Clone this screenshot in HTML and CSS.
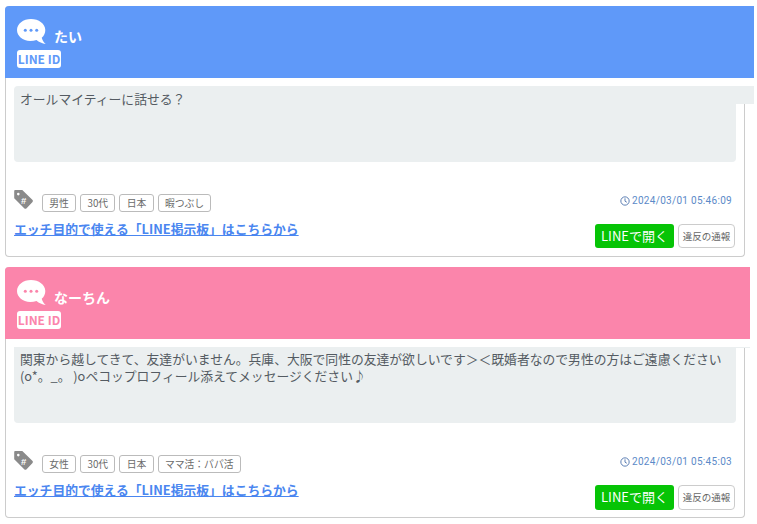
FILE: index.html
```html
<!DOCTYPE html>
<html lang="ja">
<head>
<meta charset="utf-8">
<title>LINE掲示板</title>
<link rel="stylesheet" href="styles.css">
</head>
<body>
<div class="card">
  <div class="head head-blue">
    <div class="title"><svg class="bubble" viewBox="0 0 29 25"><path fill="#fff" d="M14 0C6.300 0 0 4.900 0 11c0 6 5.800 10.800 13.200 11 2.300 0 4.400-.4 6.300-1.100 2.500 2.200 5.700 3.400 9.200 4.100-1.900-1.600-3.300-3.700-4-6.200C27.100 16.900 28.300 14.100 28.300 11 28.300 4.900 21.700 0 14 0z"/><circle class="dot" cx="8.300" cy="11.200" r="1.500"/><circle class="dot" cx="14" cy="11.200" r="1.500"/><circle class="dot" cx="19.700" cy="11.200" r="1.500"/></svg><span class="name">たい</span></div>
    <span class="lineid">LINE ID</span>
  </div>
  <div class="cover cover-blue"></div>
  <div class="msg-wrap">
    <pre class="msg msg-one">オールマイティーに話せる？</pre>
    <div class="msg-fill"></div>
  </div>
  <div class="meta">
    <div class="tags">
      <svg class="tagicon" viewBox="0 0 19 19"><path fill="#8a8a8a" d="M1.400 0h6.900l10 9.800c.8.800.8 1.600 0 2.400l-5.700 6c-.8.800-1.700.8-2.400 0L.2 8.200V1.400C.2.500.6 0 1.400 0z"/><circle cx="4.300" cy="4.100" r="1.300" fill="#fff"/><text x="7" y="14" class="hash">#</text></svg>
      <span class="tag">男性</span><span class="tag">30代</span><span class="tag">日本</span><span class="tag">暇つぶし</span>
    </div>
    <div class="time"><svg class="clock" viewBox="0 0 12 12"><circle cx="6" cy="6" r="5" fill="none" stroke="#4f74ad" stroke-width="1.100"/><path d="M6 2.800v3.400l2.200 1.300" fill="none" stroke="#4f74ad" stroke-width="1.100"/></svg>2024/03/01 05:46:09</div>
  </div>
  <div class="foot">
    <a class="ad" href="#">エッチ目的で使える「LINE掲示板」はこちらから</a>
    <div class="btns"><a class="open" href="#">LINEで開く</a><a class="report" href="#">違反の通報</a></div>
  </div>
</div>
<div class="card card-second">
  <div class="head head-pink">
    <div class="title"><svg class="bubble" viewBox="0 0 29 25"><path fill="#fff" d="M14 0C6.300 0 0 4.900 0 11c0 6 5.800 10.800 13.200 11 2.300 0 4.400-.4 6.300-1.100 2.500 2.200 5.700 3.400 9.200 4.100-1.900-1.600-3.300-3.700-4-6.200C27.100 16.900 28.300 14.100 28.300 11 28.300 4.900 21.700 0 14 0z"/><circle class="dot" cx="8.300" cy="11.200" r="1.500"/><circle class="dot" cx="14" cy="11.200" r="1.500"/><circle class="dot" cx="19.700" cy="11.200" r="1.500"/></svg><span class="name">なーちん</span></div>
    <span class="lineid">LINE ID</span>
  </div>
  <div class="cover cover-pink"></div>
  <div class="msg-wrap">
    <div class="hair"></div>
    <pre class="msg msg-two">関東から越してきて、友達がいません。兵庫、大阪で同性の友達が欲しいです＞＜既婚者なので男性の方はご遠慮ください
(o*。_。 )oペコップロフィール添えてメッセージください♪</pre>
  </div>
  <div class="meta">
    <div class="tags">
      <svg class="tagicon" viewBox="0 0 19 19"><path fill="#8a8a8a" d="M1.400 0h6.900l10 9.800c.8.800.8 1.600 0 2.400l-5.700 6c-.8.800-1.700.8-2.400 0L.2 8.200V1.400C.2.500.6 0 1.400 0z"/><circle cx="4.300" cy="4.100" r="1.300" fill="#fff"/><text x="7" y="14" class="hash">#</text></svg>
      <span class="tag">女性</span><span class="tag">30代</span><span class="tag">日本</span><span class="tag">ママ活：パパ活</span>
    </div>
    <div class="time"><svg class="clock" viewBox="0 0 12 12"><circle cx="6" cy="6" r="5" fill="none" stroke="#4f74ad" stroke-width="1.100"/><path d="M6 2.800v3.400l2.200 1.300" fill="none" stroke="#4f74ad" stroke-width="1.100"/></svg>2024/03/01 05:45:03</div>
  </div>
  <div class="foot">
    <a class="ad" href="#">エッチ目的で使える「LINE掲示板」はこちらから</a>
    <div class="btns"><a class="open" href="#">LINEで開く</a><a class="report" href="#">違反の通報</a></div>
  </div>
</div>
</body>
</html>
```
FILE: styles.css
```css
* { box-sizing: border-box; }
html, body { overflow: hidden; }
body {
  margin: 0;
  padding: 6px 0 0 5px;
  width: 757px;
  height: 524px;
  background: #fff;
  font-family: "Noto Sans CJK JP", "Roboto", sans-serif;
  color: #495057;
}
.card {
  width: 740px;
  height: 251px;
  border: 1px solid #ccc;
  border-top: 0;
  border-radius: 4px;
  background: #fff;
}
.card-second { margin-top: 10px; }
.head {
  height: 72px;
  padding: 13px 12px 0;
  margin-left: -1px;
  border-radius: 4px 0 0 0;
}
.head-blue { background: #5f99f9; width: 749px; --accent: #5f99f9; }
.head-pink { background: #fb85ab; width: 745px; --accent: #fb85ab; }
.title { display: flex; align-items: flex-end; height: 27px; }
.bubble { width: 29px; height: 25px; display: block; margin-bottom: 2px; }
.dot { fill: var(--accent); }
.name {
  color: #fff;
  font-size: 14px;
  font-weight: 700;
  line-height: 20px;
  margin-left: 8px;
}
.lineid {
  display: block;
  width: 44px;
  height: 18px;
  margin-top: 4px;
  background: #fff;
  border-radius: 3px;
  color: var(--accent);
  font-size: 12px;
  font-weight: 700;
  line-height: 18px;
  text-align: center;
  white-space: nowrap;
}
.cover { height: 8px; background: #fff; position: relative; }
.cover-blue { width: 748px; }
.cover-pink { width: 744px; }
.msg-wrap { margin-left: 8px; width: 722px; }
.msg {
  margin: 0;
  background: #ebeff0;
  font-family: inherit;
  font-size: 12.800px;
  color: #545b62;
  white-space: pre;
}
.msg-one {
  width: 740px;
  height: 18px;
  padding: 5px 6px 0;
  line-height: 16px;
  border-radius: 4px 0 0 0;
  position: relative;
}
.msg-fill { height: 58px; background: #ebeff0; border-radius: 0 0 4px 4px; }
.hair { width: 736px; height: 1px; background: #ebeff0; position: relative; }
.msg-two {
  height: 75px;
  padding: 2px 6px 0;
  line-height: 17px;
  border-radius: 0 0 4px 4px;
}
.meta {
  display: flex;
  justify-content: space-between;
  align-items: flex-end;
  margin-top: 26px;
  padding: 0 12px 0 8px;
  height: 24px;
}
.tags { display: flex; align-items: flex-end; gap: 4px; }
.tagicon { width: 19px; height: 19px; margin: 0 5px 3px 0; }
.hash { font-size: 9.500px; fill: #fff; font-weight: 700; font-family: "Liberation Sans", sans-serif; }
.tag {
  height: 18px;
  padding: 0 6.300px;
  border: 1px solid #bbb;
  border-radius: 3px;
  font-size: 9.800px;
  line-height: 16px;
  color: #6a6a6a;
  background: #fff;
  white-space: nowrap;
}
.time {
  display: flex;
  align-items: center;
  font-family: "Roboto", sans-serif;
  font-size: 10px;
  letter-spacing: 0.300px;
  color: #5b8ac8;
  margin-bottom: 6px;
}
.clock { width: 10px; height: 10px; margin-right: 2px; }
.foot {
  display: flex;
  justify-content: space-between;
  align-items: flex-start;
  padding: 0 9px 0 8px;
  margin-top: 8px;
}
.ad {
  color: #4a86f0;
  font-size: 12.800px;
  font-weight: 700;
  line-height: 18px;
  text-decoration: underline;
  white-space: nowrap;
}
.btns { display: flex; gap: 4px; margin-top: 4px; }
.open {
  width: 79px;
  height: 24px;
  background: #06c406;
  border-radius: 3px;
  color: #fff;
  font-size: 13px;
  font-weight: 400;
  line-height: 24px;
  text-align: center;
  text-decoration: none;
}
.report {
  width: 57px;
  height: 24px;
  border: 1px solid #ccc;
  border-radius: 4px;
  color: #666;
  font-size: 9.500px;
  line-height: 22px;
  text-align: center;
  text-decoration: none;
  white-space: nowrap;
}
.card-second .open, .card-second .report { height: 25px; }
```
